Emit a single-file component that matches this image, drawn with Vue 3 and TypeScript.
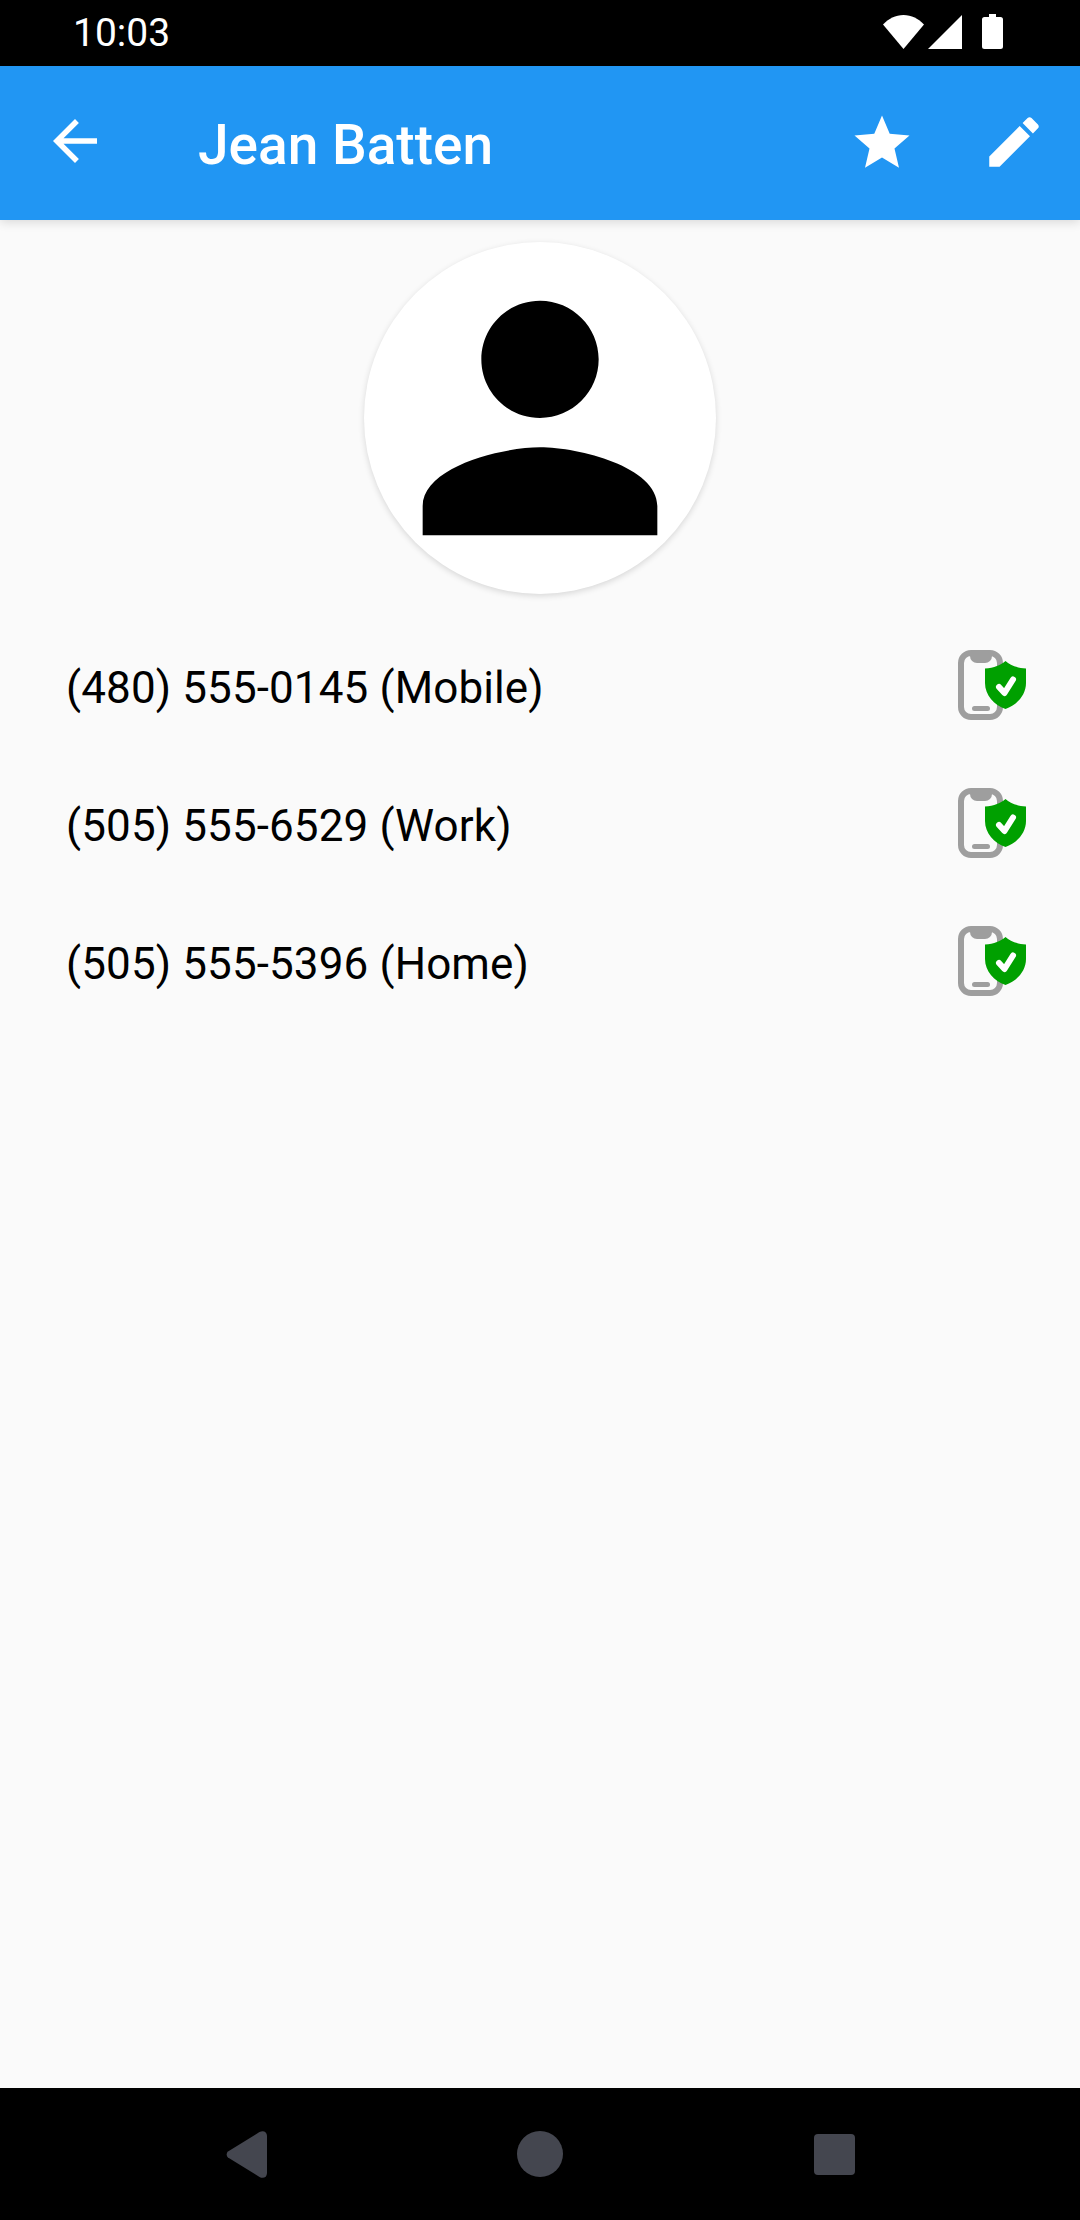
<template>
  <div class="screen">
    <div class="status-bar">
      <span class="time">10:03</span>
      <div class="status-icons">
        <svg class="wifi" width="41" height="34" viewBox="0 0 41 34">
          <path d="M20.5 34 0 9.5C5.5 3.6 12.6 0 20.5 0S35.500 3.600 41 9.500Z" fill="#fff" />
        </svg>
        <svg class="signal" width="34" height="34" viewBox="0 0 34 34">
          <path d="M0 34 34 0v34Z" fill="#fff" />
        </svg>
        <svg class="battery" width="21" height="35" viewBox="0 0 21 35">
          <path d="M7 0h7v3h4.500A2.500 2.500 0 0 1 21 5.500V32.500A2.500 2.500 0 0 1 18.500 35H2.500A2.500 2.500 0 0 1 0 32.500V5.500A2.500 2.500 0 0 1 2.500 3H7Z" fill="#fff" />
        </svg>
      </div>
    </div>

    <header class="app-bar">
      <svg class="back" width="66" height="66" viewBox="0 0 24 24">
        <path d="M20 11H7.830l5.590-5.590L12 4l-8 8 8 8 1.410-1.410L7.830 13H20v-2z" fill="#fff" />
      </svg>
      <h1>Jean Batten</h1>
      <svg class="star" width="66" height="66" viewBox="0 0 24 24">
        <path d="M12 17.270L18.180 21l-1.640-7.030L22 9.240l-7.190-.61L12 2 9.190 8.630 2 9.240l5.460 4.730L5.820 21z" fill="#fff" />
      </svg>
      <svg class="edit" width="66" height="66" viewBox="0 0 24 24">
        <path d="M3 17.250V21h3.750L17.810 9.940l-3.750-3.750L3 17.250zM20.710 7.040c.39-.39.39-1.020 0-1.410l-2.340-2.340c-.39-.39-1.020-.39-1.410 0l-1.830 1.830 3.750 3.750 1.830-1.830z" fill="#fff" />
      </svg>
    </header>

    <main class="content">
      <div class="avatar">
        <svg width="352" height="352" viewBox="0 0 24 24">
          <path d="M12 12c2.210 0 4-1.790 4-4s-1.790-4-4-4-4 1.790-4 4 1.790 4 4 4zm0 2c-2.670 0-8 1.340-8 4v2h16v-2c0-2.660-5.330-4-8-4z" fill="#000" />
        </svg>
      </div>

      <ul class="numbers">
        <li v-for="phone in phones" :key="phone.number">
          <span class="number">{{ phone.number }} ({{ phone.label }})</span>
          <svg width="70" height="70" viewBox="0 0 70 70">
            <rect x="4" y="3" width="39" height="64" rx="10" fill="none" stroke="#9e9e9e" stroke-width="6" />
            <path d="M13 1h22v5a7 7 0 0 1-7 7h-8a7 7 0 0 1-7-7Z" fill="#9e9e9e" />
            <rect x="15" y="56" width="18" height="5" rx="2.500" fill="#9e9e9e" />
            <path d="M48.500 11C53 15 60 18 69 18.500V33C69 45 60 55 48.500 59 37 55 28 45 28 33V18.500C37 18 44 15 48.500 11Z" fill="#00a000" />
            <path d="M42 37l5.500 6L56 29.500" fill="none" stroke="#fff" stroke-width="6" stroke-linecap="round" stroke-linejoin="round" />
          </svg>
        </li>
      </ul>
    </main>

    <nav class="nav-bar">
      <div class="nav-item">
        <svg width="41" height="47" viewBox="0 0 41 47">
          <path d="M2 26.500a4 4 0 0 1 0-6L33.500 1C37 -1 41 0.500 41 5V42C41 46.500 37 48 33.500 46Z" fill="#44464f" />
        </svg>
      </div>
      <div class="nav-item">
        <span class="home" />
      </div>
      <div class="nav-item">
        <span class="recents" />
      </div>
    </nav>
  </div>
</template>

<script setup lang="ts">
interface Phone {
  number: string
  label: string
}

const phones: Phone[] = [
  { number: '(480) 555-0145', label: 'Mobile' },
  { number: '(505) 555-6529', label: 'Work' },
  { number: '(505) 555-5396', label: 'Home' },
]
</script>

<style>
html,
body {
  margin: 0;
  padding: 0;
}
</style>

<style scoped>
.screen {
  display: flex;
  flex-direction: column;
  width: 1080px;
  height: 2220px;
  overflow: hidden;
  background-color: #fafafa;
  font-family: Roboto, "Liberation Sans", sans-serif;
}

.status-bar {
  display: flex;
  justify-content: space-between;
  flex: 0 0 66px;
  padding: 0 77px 0 73px;
  background-color: #000;
  color: #fff;
}

.time {
  font-size: 39px;
  line-height: 66px;
}

.status-icons {
  display: flex;
  align-items: flex-start;
  padding-top: 14px;
}

.wifi,
.signal {
  margin-top: 1px;
}

.signal {
  margin-left: 4px;
}

.battery {
  margin-left: 20px;
}

.app-bar {
  position: relative;
  z-index: 1;
  display: flex;
  align-items: center;
  flex: 0 0 154px;
  padding: 0 33px 0 42px;
  background-color: #2196f3;
  box-shadow: 0 2px 10px rgba(0, 0, 0, 0.14);
}

.back {
  margin-bottom: 4px;
}

.app-bar h1 {
  flex: 1;
  margin: 3px 0 0 90px;
  color: #fff;
  font-size: 55px;
  font-weight: 500;
}

.edit {
  margin-left: 66px;
  margin-bottom: 2px;
}

.content {
  flex: 1;
  padding-top: 22px;
}

.avatar {
  width: 352px;
  height: 352px;
  margin: 0 auto 22px;
  border-radius: 50%;
  background-color: #fff;
  box-shadow: 0 2px 6px rgba(0, 0, 0, 0.14);
}

.avatar svg {
  display: block;
}

.numbers {
  margin: 0;
  padding: 0;
  list-style: none;
}

.numbers li {
  display: flex;
  align-items: center;
  justify-content: space-between;
  height: 138px;
  padding: 0 53px 0 66px;
  color: #000;
  font-size: 44px;
  letter-spacing: 0.12px;
}

.number {
  margin-top: 6px;
}

.nav-bar {
  display: flex;
  justify-content: center;
  flex: 0 0 132px;
  background-color: #000;
}

.nav-item {
  display: flex;
  align-items: center;
  justify-content: center;
  width: 294px;
}

.home {
  width: 46px;
  height: 46px;
  border-radius: 50%;
  background-color: #44464f;
}

.recents {
  width: 41px;
  height: 41px;
  border-radius: 4px;
  background-color: #44464f;
}
</style>
